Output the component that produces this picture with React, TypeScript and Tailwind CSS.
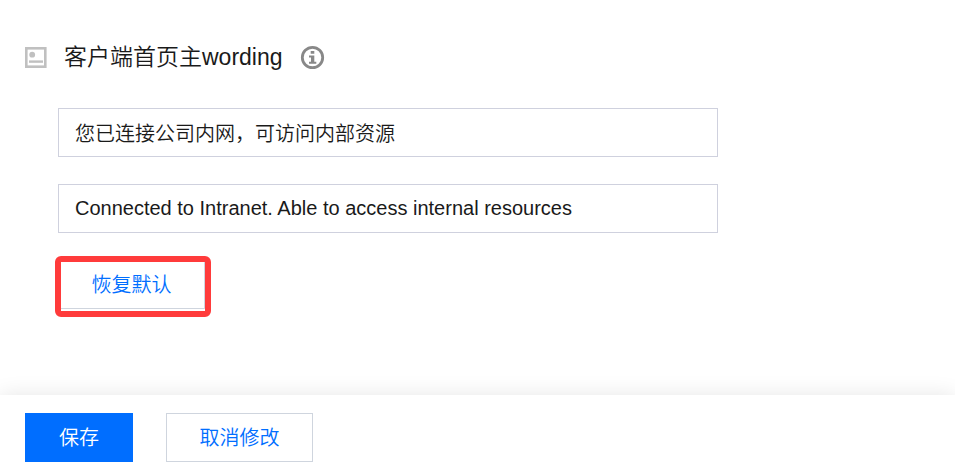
import { useState } from 'react';

const DEFAULT_ZH = '您已连接公司内网，可访问内部资源';
const DEFAULT_EN = 'Connected to Intranet. Able to access internal resources';

export default function App() {
  const [zh, setZh] = useState(DEFAULT_ZH);
  const [en, setEn] = useState(DEFAULT_EN);

  const restoreDefaults = () => {
    setZh(DEFAULT_ZH);
    setEn(DEFAULT_EN);
  };

  return (
    <div className="flex min-h-screen flex-col bg-white font-['Liberation_Sans','Noto_Sans_CJK_SC',sans-serif] font-[350] text-[#1a1a1a]">
      <main className="flex-1 px-6 pt-[39px] pb-8">
        <header className="flex h-9 items-center">
          <CardIcon />
          <h1 className="ml-4 text-[23px] leading-9 font-[350]">客户端首页主wording</h1>
          <button type="button" aria-label="说明" className="ml-[17px]">
            <InfoIcon />
          </button>
        </header>

        <div className="mt-[33px] flex max-w-[694px] flex-col items-start gap-[27px] pl-[34px]">
          <WordingInput label="中文文案" value={zh} onChange={setZh} />
          <WordingInput label="英文文案" value={en} onChange={setEn} />
          <div className="relative">
            <button type="button" onClick={restoreDefaults} className="h-[49px] w-[147px] border border-[#cfd5de] bg-white text-[20px] text-[#006eff]">
              恢复默认
            </button>
            <div className="pointer-events-none absolute -top-1 -right-1.5 -bottom-2 -left-[3px] rounded-md border-6 border-[#ff3b3b]" />
          </div>
        </div>
      </main>

      <footer className="sticky bottom-0 flex gap-[33px] bg-white px-[25px] pt-[18px] pb-3 shadow-[0_0_20px_rgba(0,0,0,0.1)]">
        <button type="button" className="h-[49px] w-[108px] bg-[#006eff] text-[20px] text-white">
          保存
        </button>
        <button type="button" onClick={restoreDefaults} className="h-[49px] w-[147px] border border-[#cfd5de] bg-white text-[20px] text-[#006eff]">
          取消修改
        </button>
      </footer>
    </div>
  );
}

function WordingInput({ label, value, onChange }: { label: string; value: string; onChange: (value: string) => void }) {
  return (
    <input
      type="text"
      aria-label={label}
      value={value}
      onChange={(event) => onChange(event.target.value)}
      className="h-[49px] w-full border border-[#cfd1de] bg-white px-4 text-[20px] outline-none focus:border-[#006eff]"
    />
  );
}

function CardIcon() {
  return (
    <svg width="24" height="24" viewBox="0 0 24 24" fill="none" aria-hidden="true">
      <rect x="2.3" y="3.3" width="19" height="18.4" stroke="#c0c0c0" strokeWidth="2.6" />
      <circle cx="8.2" cy="9.7" r="2.9" fill="#c0c0c0" />
      <path d="M5 16.6h14" stroke="#c0c0c0" strokeWidth="2.4" />
    </svg>
  );
}

function InfoIcon() {
  return (
    <svg width="25" height="25" viewBox="0 0 25 25" fill="none" aria-hidden="true">
      <circle cx="12.5" cy="12.5" r="10.2" stroke="#888" strokeWidth="2.8" />
      <path d="M10.7 6h3.6v2.8h-3.6zM9 10.4h5.3v6.4h2v2H9v-2h2v-4.4H9z" fill="#888" />
    </svg>
  );
}
